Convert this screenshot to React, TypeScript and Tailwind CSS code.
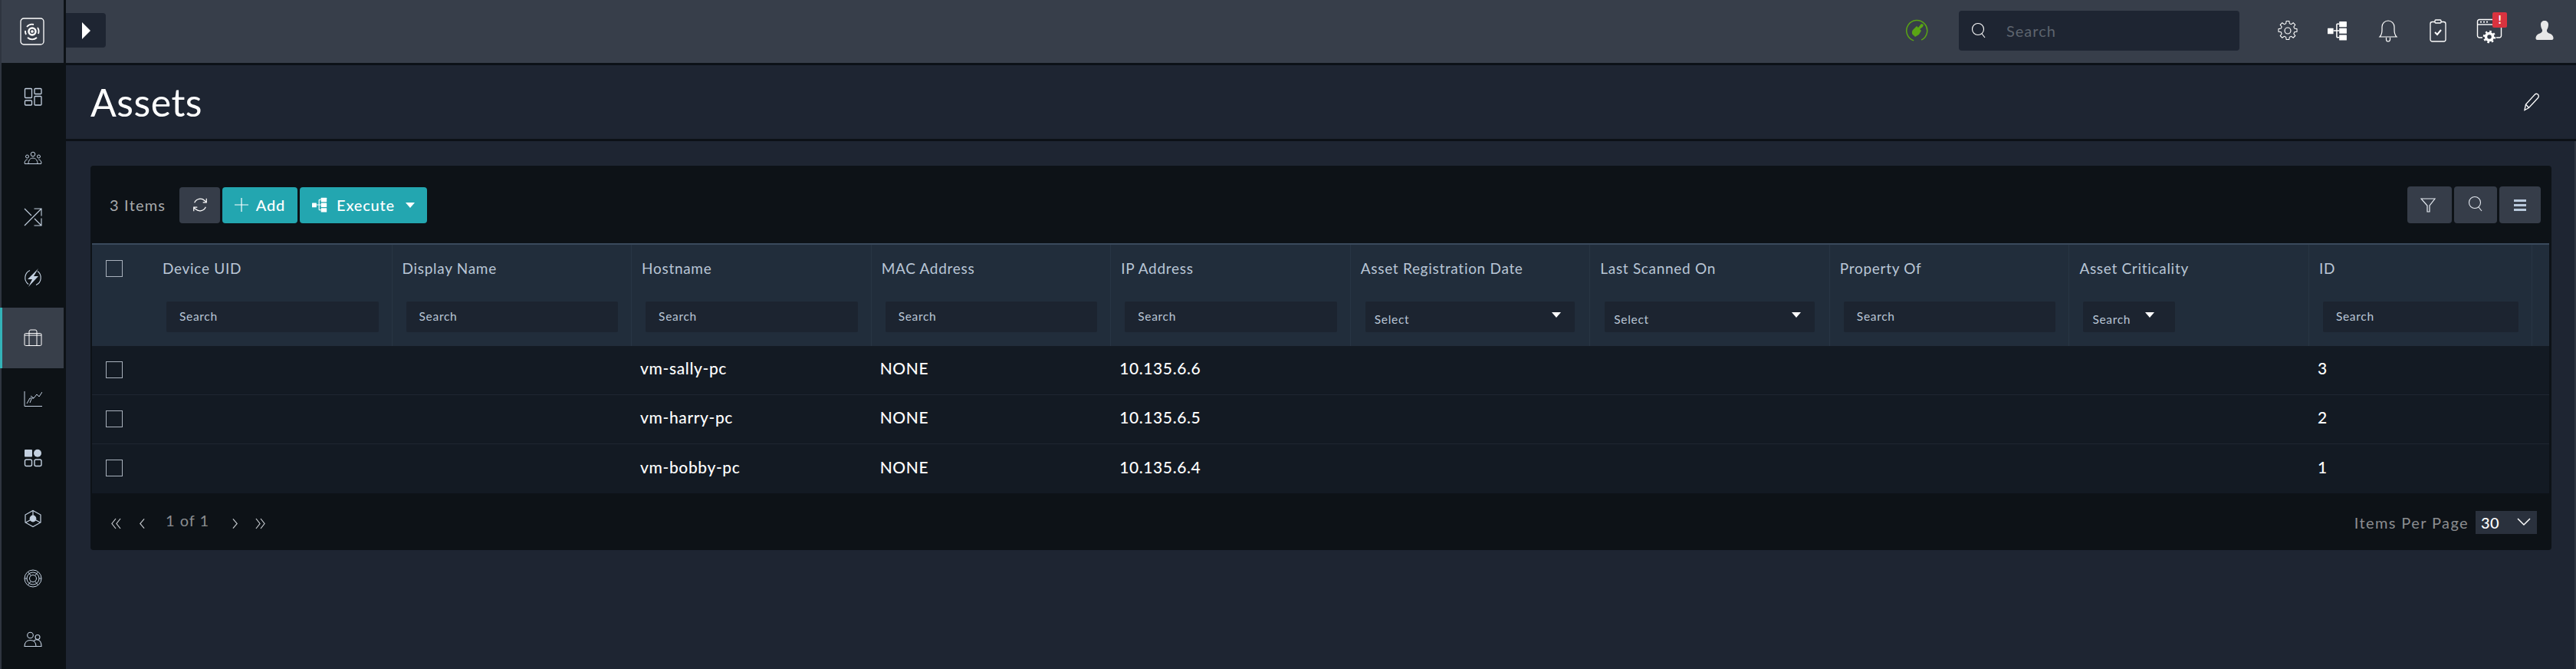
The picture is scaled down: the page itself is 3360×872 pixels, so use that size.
import React from "react";

const cols = [
  { label: "Device UID", kind: "search" },
  { label: "Display Name", kind: "search" },
  { label: "Hostname", kind: "search" },
  { label: "MAC Address", kind: "search" },
  { label: "IP Address", kind: "search" },
  { label: "Asset Registration Date", kind: "select" },
  { label: "Last Scanned On", kind: "select" },
  { label: "Property Of", kind: "search" },
  { label: "Asset Criticality", kind: "small" },
  { label: "ID", kind: "search" },
];

const rows = [
  { host: "vm-sally-pc", mac: "NONE", ip: "10.135.6.6", id: "3" },
  { host: "vm-harry-pc", mac: "NONE", ip: "10.135.6.5", id: "2" },
  { host: "vm-bobby-pc", mac: "NONE", ip: "10.135.6.4", id: "1" },
];

const gridCols = "grid grid-cols-[79px_repeat(9,312.55px)_291px_22px]";

const Svg = ({ size = 24, children, sw = 1.2 }: { size?: number; children: React.ReactNode; sw?: number }) => (
  <svg width={size} height={size} viewBox="0 0 24 24" fill="none" stroke="currentColor" strokeWidth={sw}>
    {children}
  </svg>
);

const navIcons: React.ReactNode[] = [
  <Svg key="dash" sw={1.3}>
    <rect x="1.5" y="1.5" width="9" height="12" rx="1" />
    <rect x="14" y="1.5" width="9" height="7" rx="1" />
    <rect x="1.5" y="17" width="9" height="6" rx="1" />
    <rect x="14" y="11.5" width="9" height="11.5" rx="1" />
  </Svg>,
  <Svg key="people" sw={1}>
    <circle cx="12" cy="8" r="2.800" />
    <circle cx="4.500" cy="11" r="2" />
    <circle cx="19.500" cy="11" r="2" />
    <path d="M6 20c0-4 2.500-7 6-7s6 3 6 7M1 20c0-3 1.500-5 3.700-5M23 20c0-3-1.500-5-3.700-5M1 20.500h22" />
  </Svg>,
  <Svg key="shuffle" sw={1.1}>
    <path d="M1 23 23 1M13.500 1H23v9.500M1 1l9 9M14 14l9 9M23 13.500V23h-9.500" />
  </Svg>,
  <Svg key="bolt" sw={1.1}>
    <path d="M8 2.500A10.500 10.500 0 0 0 6 20.500M16 21.500A10.500 10.500 0 0 0 18 3.500" />
    <path d="M19 0 5 14h6l-5 10 13-14h-6z" fill="currentColor" stroke="none" />
  </Svg>,
  <Svg key="case" size={24} sw={1}>
    <rect x="1" y="6.500" width="22" height="16" rx="1.500" />
    <path d="M7 22.500V4a2 2 0 0 1 2-2h6a2 2 0 0 1 2 2v18.500M1 9h22" />
  </Svg>,
  <Svg key="chart" sw={1}>
    <path d="M1 3v19.500h23M4 19l4-7h5M10 13l-2 5M9 9l4 3 4-5 3 3 4-6" />
  </Svg>,
  <Svg key="apps" sw={1.4}>
    <rect x="1" y="1" width="10" height="9.500" rx="1" fill="currentColor" stroke="none" />
    <circle cx="18" cy="5.700" r="5" fill="currentColor" stroke="none" />
    <rect x="1.500" y="14" width="9" height="8.500" rx="2" />
    <rect x="14" y="14" width="9" height="8.500" rx="2" />
  </Svg>,
  <Svg key="cube" sw={1.2}>
    <path d="M12 1.500 22 7v10l-10 5.500L2 17V7z" />
    <path d="M12 1.500V12M2.500 17 12 12l9.500 5" />
    <circle cx="12" cy="12" r="3.800" fill="currentColor" />
  </Svg>,
  <Svg key="ring" sw={1}>
    <circle cx="12" cy="12" r="11" />
    <circle cx="12" cy="12" r="8" />
    <circle cx="12" cy="12" r="4.500" />
    <path d="M6 4 9 8M18 4l-3 4M6 20l3-4M18 20l-3-4M1 12h3M20 12h3" />
  </Svg>,
  <Svg key="users" sw={1.1}>
    <circle cx="8.500" cy="7" r="3.800" />
    <circle cx="18" cy="9.500" r="3" />
    <path d="M1 21.500c0-5 3-8 7.500-8s7.500 3 7.500 8zM13 14.500c1.500-1.500 3.500-2 5-1.500 3 .5 5 4 5 8.500h-7" />
  </Svg>,
];

const Triangle = ({ className }: { className: string }) => (
  <span className={`h-0 w-0 border-x-[6px] border-x-transparent border-t-[7px] ${className}`} />
);

const HeaderFilter = ({ kind }: { kind: string }) => {
  if (kind === "search") {
    return (
      <div className="ml-[18px] mr-[17px] flex h-10 items-center rounded-[2px] bg-[#1c2430] pl-[17px] pb-[1px] text-[15.5px] tracking-[0.7px] text-[#b9c6d6]">
        Search
      </div>
    );
  }
  if (kind === "select") {
    return (
      <div className="mx-[19px] flex h-10 justify-between rounded-[2px] bg-[#1c2430] pl-3 pr-[18px] text-[15.5px] tracking-[0.7px] text-[#b9c6d6]">
        <span className="pt-[12px]">Select</span>
        <Triangle className="mt-[14px] border-t-white" />
      </div>
    );
  }
  return (
    <div className="ml-[18px] flex h-10 w-[120px] justify-between rounded-[2px] bg-[#1c2430] pl-3 pr-[27px] text-[15.5px] tracking-[0.7px] text-[#b9c6d6]">
      <span className="pt-[12px]">Search</span>
      <Triangle className="mt-[14px] border-t-white" />
    </div>
  );
};

const Checkbox = () => (
  <span className="block h-[22px] w-[22px] border border-[#aab2bd] bg-transparent" />
);

const ToolButton = ({ className, children }: { className: string; children: React.ReactNode }) => (
  <button className={`flex h-[47px] items-center justify-center rounded-[4px] ${className}`}>{children}</button>
);

const Hierarchy = ({ size = 24 }: { size?: number }) => (
  <svg width={size} height={size} viewBox="0 0 24 24" fill="currentColor">
    <rect x="0" y="9" width="7" height="7" rx="0.5" />
    <rect x="14" y="1" width="9" height="6.500" rx="0.5" />
    <rect x="14" y="9" width="9" height="6.500" rx="0.5" />
    <rect x="14" y="17" width="9" height="6.500" rx="0.5" />
    <path d="M7 12h4M11 4v16M11 4h3M11 12h3M11 20h3" stroke="currentColor" strokeWidth="1.400" fill="none" />
  </svg>
);

export default function App() {
  return (
    <div className="flex h-[872px] w-[3360px] overflow-hidden bg-[#1e2532] font-['Lato',sans-serif]">
      {/* side nav */}
      <aside className="w-[86px] shrink-0 border-l-2 border-[#2f3540] bg-[#0d1216]">
        <div className="flex h-[82px] w-[81px] items-center justify-center bg-[#383f4b] text-white">
          <svg width="32" height="36" viewBox="0 0 32 36" fill="none" stroke="currentColor" strokeWidth="1.300" className="mr-[2px]">
            <rect x="1" y="1" width="30" height="34" rx="4" />
            <path d="M9 12a9 9 0 0 1 9-3M23 13a9 9 0 0 1 1 8M22 26a9 9 0 0 1-12 0M8 22a9 9 0 0 1-1-5" strokeWidth="1.800" />
            <circle cx="16" cy="18" r="4.500" strokeWidth="2.500" />
            <circle cx="16" cy="18" r="1.200" fill="currentColor" />
          </svg>
        </div>
        <div className="h-[5px]" />
        {navIcons.map((icon, i) => (
          <div
            key={i}
            className={
              i === 4
                ? "-ml-[2px] flex h-[78.5px] w-[83px] items-center justify-center border-l-[3px] border-[#33b3b8] bg-[#383f4a] text-white"
                : "flex h-[78.5px] w-[81px] items-center justify-center text-[#c3d0e0]"
            }
          >
            {icon}
          </div>
        ))}
      </aside>

      <main className="min-w-0 flex-1">
        {/* top bar */}
        <header className="flex h-[85px] items-center border-b-[3px] border-[#0c1117] bg-[#373e4a] pb-[3px]">
          <div className="flex h-[45px] w-[52px] items-center justify-center rounded-r-[4px] bg-[#1e2532] text-white">
            <span className="h-0 w-0 border-y-[11px] border-l-[11px] border-y-transparent border-l-white" />
          </div>
          <div className="ml-auto flex items-center">
            <svg width="30" height="30" viewBox="0 0 30 30" fill="none" className="text-[#5aa514]">
              <path d="M19 28A13.500 13.500 0 1 0 9 27" stroke="currentColor" strokeWidth="1.500" transform="rotate(-10 15 15)" />
              <path d="M21 6l-4 5-2-2-5 5c-2 3-1 6 1 7l2 2 5-3 3-5-2-2 4-3 1-3z" fill="currentColor" />
            </svg>
            <div className="ml-[40px] flex h-[52px] w-[366px] items-center rounded-[4px] bg-[#1e2532] pl-4">
              <svg width="20" height="22" viewBox="0 0 20 22" fill="none" stroke="white" strokeWidth="1.100">
                <circle cx="9" cy="9" r="7.500" />
                <path d="m14 15 4 5" />
              </svg>
              <span className="ml-[26px] text-[20px] tracking-[1px] text-[#5d646e]">Search</span>
            </div>
            <div className="ml-[49px] flex w-[28px] justify-center text-white">
              <svg width="30" height="30" viewBox="0 0 24 24" fill="none" stroke="currentColor" strokeWidth="1">
                <circle cx="12" cy="12" r="3.400" />
                <path d="M10.300 2h3.400l.5 3 2 .9 2.500-1.800 2.400 2.400-1.800 2.500.9 2 3 .5v3.400l-3 .5-.9 2 1.800 2.500-2.400 2.400-2.500-1.800-2 .9-.5 3h-3.400l-.5-3-2-.9-2.500 1.800-2.400-2.400 1.800-2.500-.9-2-3-.5v-3.400l3-.5.9-2-1.800-2.500 2.400-2.400 2.500 1.800 2-.9z" transform="translate(12 12) scale(.92) translate(-12 -13.700)" />
              </svg>
            </div>
            <div className="ml-[38px] flex w-[26px] justify-center text-white"><Hierarchy size={26} /></div>
            <div className="ml-[40px] flex w-[26px] justify-center text-white">
              <svg width="26" height="30" viewBox="0 0 26 30" fill="none" stroke="currentColor" strokeWidth="1.200">
                <path d="M2 23c2-2 3-4 3-9V10a8 8 0 0 1 16 0v4c0 5 1 7 3 9zM10.500 24v2.500a2.500 2.500 0 0 0 5 0V24" />
              </svg>
            </div>
            <div className="ml-[39px] flex w-[26px] justify-center text-white">
              <svg width="22" height="30" viewBox="0 0 22 30" fill="none" stroke="currentColor" strokeWidth="1.300">
                <rect x="1" y="3.500" width="20" height="25.500" rx="2.500" />
                <rect x="7" y="1" width="8" height="4" rx="1" fill="#373e4a" />
                <path d="m7 17 3 3 5-6" strokeWidth="2" />
              </svg>
            </div>
            <div className="relative ml-[37px] flex w-[34px] justify-center text-white">
              <svg width="34" height="34" viewBox="0 0 34 34" fill="none" stroke="currentColor" strokeWidth="1.400">
                <path d="M8 26H4a2.500 2.500 0 0 1-2.500-2.500V5A2.500 2.500 0 0 1 4 2.500h26A2.500 2.500 0 0 1 32.500 5v18.500A2.500 2.500 0 0 1 30 26h-4" />
                <path d="M1.500 9h31" />
                <path d="M5 5.700h2M9 5.700h2M13 5.700h2" strokeWidth="1.800" />
                <circle cx="17" cy="25" r="4.500" strokeWidth="3.500" />
                <circle cx="17" cy="25" r="7" strokeWidth="2.500" strokeDasharray="2.500 3" />
              </svg>
              <span className="absolute -top-[7px] left-[21px] flex h-[20px] w-[19px] items-center justify-center rounded-[2px] bg-[#d9333f] text-[15px] font-bold leading-none text-white">
                !
              </span>
            </div>
            <div className="ml-[43px] mr-[29px] flex w-[24px] justify-center text-[#e8e8e8]">
              <svg width="24" height="26" viewBox="0 0 24 26" fill="currentColor">
                <path d="M12 0c3 0 5 2 5 5 0 3-1 5-2 7-.5 2 1 3.500 3 4.500 3 1 5 2.500 5.500 5.500.2 2-.5 3-2 3H2.500c-1.500 0-2.200-1-2-3C1 19 3 17.500 6 16.500c2-1 3.500-2.500 3-4.500-1-2-2-4-2-7 0-3 2-5 5-5z" />
              </svg>
            </div>
          </div>
        </header>

        {/* page title */}
        <div className="flex h-[99px] items-center justify-between border-b-[3px] border-[#0c1117] pl-[32px] pr-[46px]">
          <h1 className="text-[50px] font-normal leading-none tracking-[0.5px] text-white">Assets</h1>
          <svg width="24" height="24" viewBox="0 0 24 24" fill="none" stroke="white" strokeWidth="1.300">
            <path d="M3 22.500 4.500 15 16.500 2c1.500-1.500 4-.5 4.500 1s.5 2.500-.5 3.500L8.500 19.500zM4.500 15l4 4.500" />
          </svg>
        </div>

        <div className="h-[688px] border-r-2 border-[#2f3540] pl-[32px] pr-[30px] pt-[32px]">
          <section className="h-[501px] rounded-[4px] bg-[#0d1217]">
            {/* toolbar */}
            <div className="flex h-[101px] items-center pt-[1px] pl-[25px] pr-[14px]">
              <span className="w-[91px] text-[20px] tracking-[1.200px] text-[#a7a9ac]">3 Items</span>
              <div className="flex gap-[3px]">
                <ToolButton className="w-[53px] bg-[#363d49] text-white">
                  <svg width="22" height="22" viewBox="0 0 24 24" fill="none" stroke="currentColor" strokeWidth="1.300">
                    <path d="M4 9A9 9 0 0 1 18.500 6L21 8M20 15a9 9 0 0 1-14.500 3L3 16" />
                    <path d="M21 3v5.500h-5M3 21v-5.500h5" />
                  </svg>
                </ToolButton>
                <ToolButton className="w-[98px] gap-[10px] bg-[#23a6b0] text-[20px] font-medium tracking-[0.8px] text-white">
                  <svg width="18" height="18" viewBox="0 0 18 18" stroke="currentColor" strokeWidth="1.200"><path d="M9 0v18M0 9h18" /></svg>
                  Add
                </ToolButton>
                <ToolButton className="w-[166px] gap-[12px] bg-[#23a6b0] text-[20px] font-medium tracking-[0.8px] text-white">
                  <Hierarchy size={20} />
                  Execute
                  <Triangle className="ml-[2px] border-t-white" />
                </ToolButton>
              </div>
              <div className="ml-auto flex gap-[3px]">
                <ToolButton className="h-[48px] w-[58px] bg-[#363d49] text-[#e6ebf2]">
                  <svg width="20" height="20" viewBox="0 0 20 20" fill="none" stroke="currentColor" strokeWidth="1.200" className="-ml-[4px]">
                    <path d="M1 2h18l-7 9v8h-3v-8z" />
                  </svg>
                </ToolButton>
                <ToolButton className="h-[48px] w-[56px] bg-[#363d49] text-[#e6ebf2]">
                  <svg width="20" height="22" viewBox="0 0 20 22" fill="none" stroke="currentColor" strokeWidth="1.100" className="-mt-[2px]">
                    <circle cx="9" cy="9" r="7.500" />
                    <path d="m14 15 4 5" />
                  </svg>
                </ToolButton>
                <ToolButton className="h-[48px] w-[54px] bg-[#363d49] text-[#b9c9dc]">
                  <span className="flex w-4 flex-col gap-[3px]">
                    <span className="h-[3px] bg-current" />
                    <span className="h-[3px] bg-current" />
                    <span className="h-[3px] bg-current" />
                  </span>
                </ToolButton>
              </div>
            </div>

            {/* table */}
            <div className="ml-[2px] mr-[3px]">
              <div className={`${gridCols} h-[134px] border-t-2 border-[#3a4a5c] bg-[#212d3b]`}>
                <div className="pl-[18px] pt-[20px]">
                  <Checkbox />
                </div>
                {cols.map((col) => (
                  <div key={col.label} className="border-r border-[#283544]">
                    <div className="pl-[13px] pt-[19px] text-[19px] leading-[24px] tracking-[0.7px] text-[#b9c6d6]">
                      {col.label}
                    </div>
                    <div className="mt-[31px]">
                      <HeaderFilter kind={col.kind} />
                    </div>
                  </div>
                ))}
                <div />
              </div>
              {rows.map((row, i) => (
                <div key={row.id} className={`${gridCols} h-[64px] items-center bg-[#131a23] ${i < 2 ? "border-b border-[#1f2631]" : ""}`}>
                  <div className="pb-[2px] pl-[18px]">
                    <Checkbox />
                  </div>
                  <div />
                  <div />
                  {[row.host, row.mac, row.ip, "", "", "", "", row.id].map((v, j) => (
                    <div key={j} className="pb-[5px] pl-[11px] text-[21px] font-medium tracking-[0.6px] text-white">
                      {v}
                    </div>
                  ))}
                  <div />
                </div>
              ))}
            </div>

            {/* pager */}
            <div className="flex h-[75px] items-center pl-[27px] pr-[19px] text-[#8b8d90]">
              <svg width="13" height="15" viewBox="0 0 14 16" fill="none" stroke="#c4c8cd" strokeWidth="1.300" className="mt-[4px]"><path d="M6.500 1 1 8l5.500 7M13 1 7.500 8l5.500 7" /></svg>
              <svg width="8" height="15" viewBox="0 0 9 16" fill="none" stroke="#c4c8cd" strokeWidth="1.300" className="ml-[23px] mt-[4px]"><path d="M8 1 2 8l6 7" /></svg>
              <span className="ml-[27px] -mt-[6px] text-[20px] tracking-[1px]">1 of 1</span>
              <svg width="8" height="15" viewBox="0 0 9 16" fill="none" stroke="#c4c8cd" strokeWidth="1.300" className="ml-[30px] mt-[4px]"><path d="m1 1 6 7-6 7" /></svg>
              <svg width="13" height="15" viewBox="0 0 14 16" fill="none" stroke="#c4c8cd" strokeWidth="1.300" className="ml-[22px] mt-[4px]"><path d="m1 1 5.500 7L1 15M7.500 1 13 8l-5.500 7" /></svg>
              <span className="ml-auto text-[20px] tracking-[1.400px]">Items Per Page</span>
              <div className="ml-[9px] flex h-[30px] w-[80px] items-center justify-between bg-[#2a313d] pl-[7px] pr-[8px] text-[20px] font-medium tracking-[0.5px] text-white">
                30
                <svg width="18" height="11" viewBox="0 0 18 11" fill="none" stroke="currentColor" strokeWidth="1.500"><path d="m1 1 8 8 8-8" /></svg>
              </div>
            </div>
          </section>
        </div>
      </main>
    </div>
  );
}
